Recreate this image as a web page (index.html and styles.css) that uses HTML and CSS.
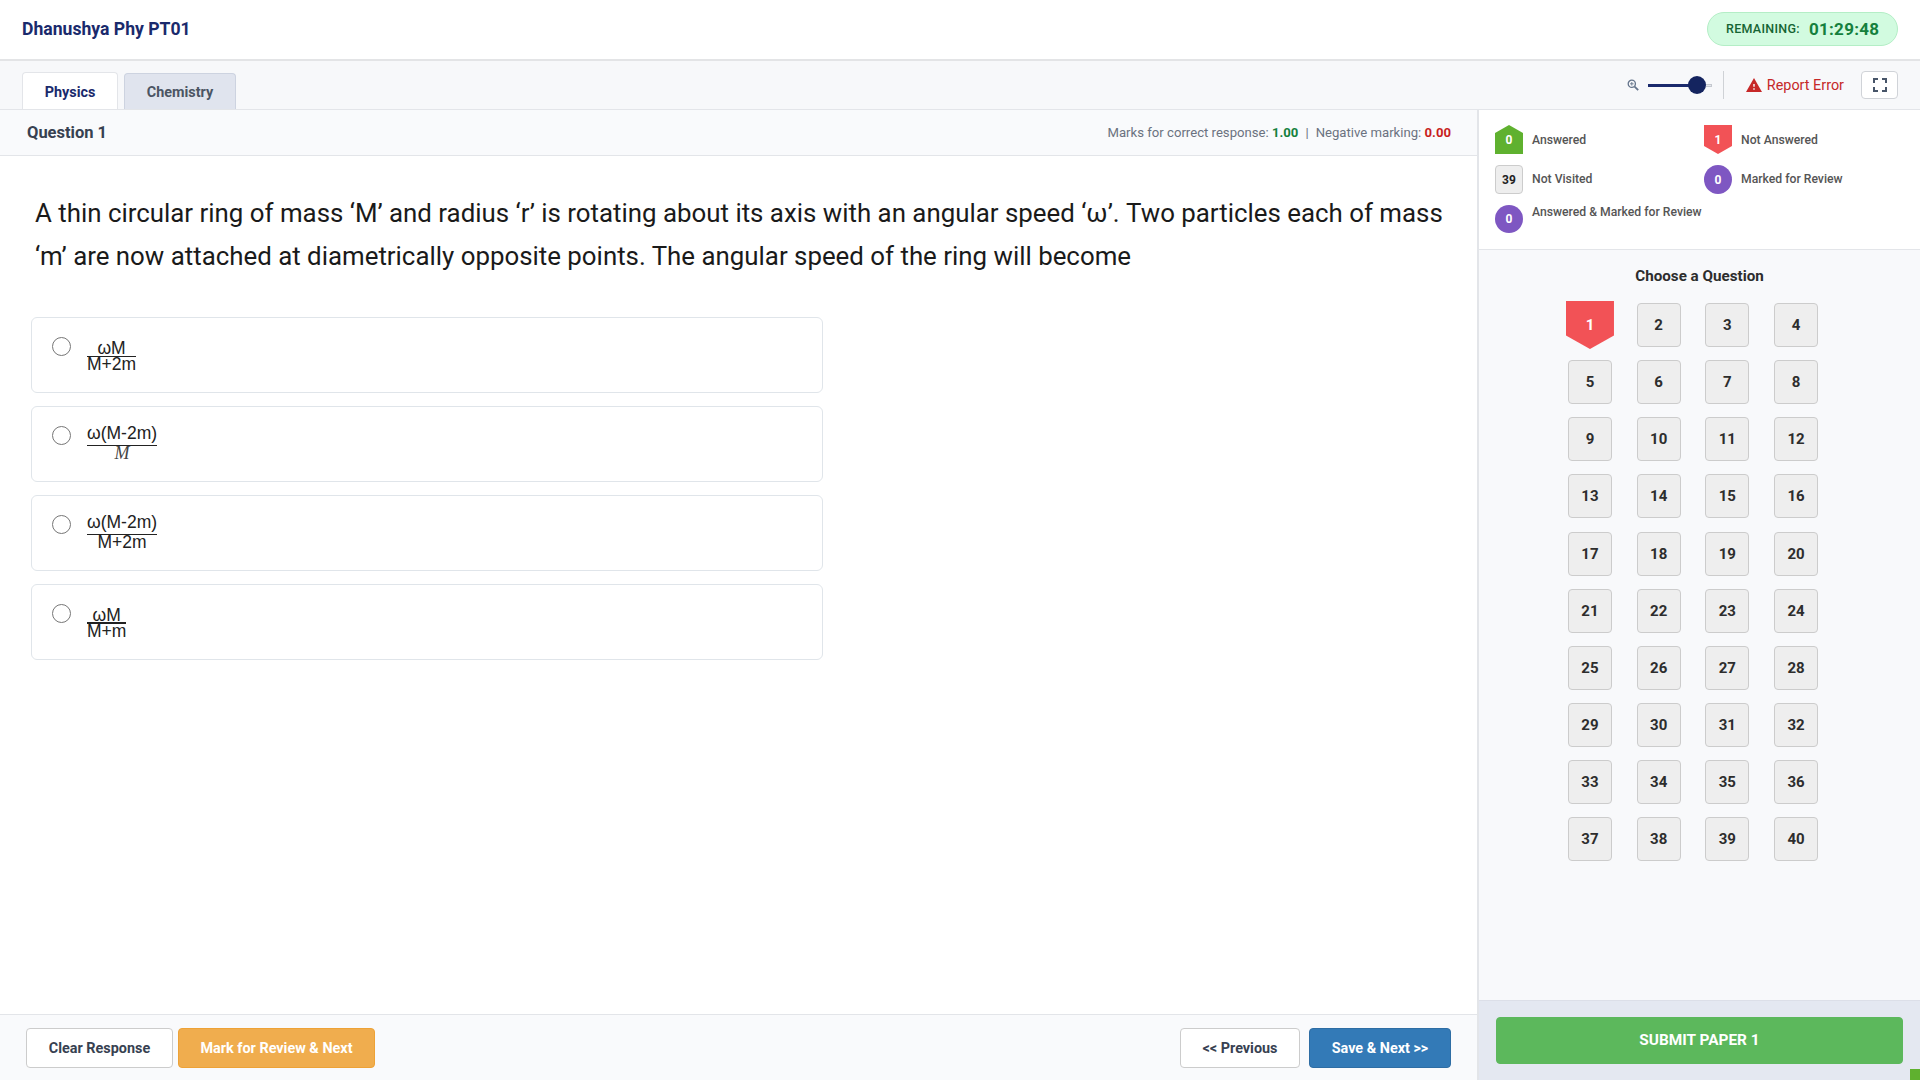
FILE: index.html
```html
<!DOCTYPE html>
<html lang="en">
<head>
<meta charset="utf-8">
<title>Dhanushya Phy PT01</title>
<link rel="stylesheet" href="styles.css">
</head>
<body>
<header class="top">
  <div class="title">Dhanushya Phy PT01</div>
  <div class="timer"><span class="timer-label">REMAINING:</span><span class="timer-value">01:29:48</span></div>
</header>
<nav class="tabbar">
  <div class="tabs">
    <div class="tab tab-active">Physics</div>
    <div class="tab tab-idle">Chemistry</div>
  </div>
  <div class="tools">
    <svg class="zoom-icon" viewBox="0 0 12 12" width="12" height="12"><circle cx="4.8" cy="4.8" r="3.6" fill="none" stroke="#64748b" stroke-width="1.3"/><path d="M7.6 7.6L11.2 11.2" stroke="#64748b" stroke-width="1.8"/><path d="M3 4.8h3.6M4.8 3v3.6" stroke="#64748b" stroke-width="0.9"/></svg>
    <div class="slider"><div class="slider-fill"></div><div class="slider-thumb"></div><div class="slider-rest"></div></div>
    <div class="sep"></div>
    <div class="report">
      <svg viewBox="1 2 22 19" width="16" height="14"><path fill="#c62828" d="M1 21h22L12 2 1 21zm12-3h-2v-2h2v2zm0-4h-2v-4h2v4z"/></svg>
      <span>Report Error</span>
    </div>
    <div class="fs-btn"><svg viewBox="0 0 24 24" width="24" height="24"><path fill="#475569" d="M7 14H5v5h5v-2H7v-3zm-2-4h2V7h3V5H5v5zm12 7h-3v2h5v-5h-2v3zM14 5v2h3v3h2V5h-5z"/></svg></div>
  </div>
</nav>
<div class="main">
  <section class="left">
    <div class="qbar">
      <div class="qname">Question 1</div>
      <div class="marks">Marks for correct response: <b class="pos">1.00</b><span class="pipe">|</span>Negative marking: <b class="neg">0.00</b></div>
    </div>
    <div class="content">
      <p class="qtext">A thin circular ring of mass ‘M’ and radius ‘r’ is rotating about its axis with an angular speed ‘ω’. Two particles each of mass ‘m’ are now attached at diametrically opposite points. The angular speed of the ring will become</p>
      <div class="options">
        <label class="option"><input type="radio" name="a" class="radio"><span class="frac"><span class="num">ωM</span><span class="den">M+2m</span></span></label>
        <label class="option"><input type="radio" name="a" class="radio"><span class="frac frac-high"><span class="num">ω(M-2m)</span><span class="den den-serif">M</span></span></label>
        <label class="option"><input type="radio" name="a" class="radio"><span class="frac frac-high"><span class="num">ω(M-2m)</span><span class="den">M+2m</span></span></label>
        <label class="option"><input type="radio" name="a" class="radio"><span class="frac frac-tight"><span class="num">ωM</span><span class="den">M+m</span></span></label>
      </div>
    </div>
    <footer class="actions">
      <div class="group">
        <button class="btn btn-plain btn-clear">Clear Response</button>
        <button class="btn btn-orange">Mark for Review &amp; Next</button>
      </div>
      <div class="group group-right">
        <button class="btn btn-plain btn-prev">&lt;&lt; Previous</button>
        <button class="btn btn-blue">Save &amp; Next &gt;&gt;</button>
      </div>
    </footer>
  </section>
  <aside class="side">
    <div class="legend">
      <div class="lg-item"><span class="lg-ic ic-green">0</span><span>Answered</span></div>
      <div class="lg-item"><span class="lg-ic ic-red">1</span><span>Not Answered</span></div>
      <div class="lg-item"><span class="lg-ic ic-grey">39</span><span class="lg-up">Not Visited</span></div>
      <div class="lg-item"><span class="lg-ic ic-purple">0</span><span class="lg-up">Marked for Review</span></div>
      <div class="lg-item lg-wide"><span class="lg-ic ic-purple ic-short">0</span><span class="lg-top">Answered &amp; Marked for Review</span></div>
    </div>
    <div class="palette">
      <div class="pal-title">Choose a Question</div>
      <div class="grid">
        <button class="q q-red">1</button><button class="q">2</button><button class="q">3</button><button class="q">4</button>
        <button class="q">5</button><button class="q">6</button><button class="q">7</button><button class="q">8</button>
        <button class="q">9</button><button class="q">10</button><button class="q">11</button><button class="q">12</button>
        <button class="q">13</button><button class="q">14</button><button class="q">15</button><button class="q">16</button>
        <button class="q">17</button><button class="q">18</button><button class="q">19</button><button class="q">20</button>
        <button class="q">21</button><button class="q">22</button><button class="q">23</button><button class="q">24</button>
        <button class="q">25</button><button class="q">26</button><button class="q">27</button><button class="q">28</button>
        <button class="q">29</button><button class="q">30</button><button class="q">31</button><button class="q">32</button>
        <button class="q">33</button><button class="q">34</button><button class="q">35</button><button class="q">36</button>
        <button class="q">37</button><button class="q">38</button><button class="q">39</button><button class="q">40</button>
      </div>
    </div>
    <div class="submit-wrap">
      <button class="submit">SUBMIT PAPER 1</button>
      <span class="corner"></span>
    </div>
  </aside>
</div>
</body>
</html>
```
FILE: styles.css
```css
* { box-sizing: border-box; }
html, body { margin: 0; height: 100%; }
body {
  width: 1920px;
  height: 1080px;
  overflow: hidden;
  display: flex;
  flex-direction: column;
  font-family: Roboto, "Liberation Sans", sans-serif;
  background: #fff;
  color: #222;
}
button { font-family: inherit; cursor: pointer; }

.top {
  height: 61px;
  flex: none;
  display: flex;
  align-items: center;
  justify-content: space-between;
  padding: 0 22px;
  border-bottom: 2px solid #e3e4e6;
  background: #fff;
}
.title { font-size: 17.6px; font-weight: 700; color: #1a2a6c; margin-top: -2px; }
.timer {
  width: 191px;
  height: 34px;
  margin-top: -2px;
  border: 1px solid #b4eec6;
  border-radius: 17px;
  background: #d2fbe0;
  display: flex;
  align-items: center;
  padding-left: 18px;
  color: #15803d;
}
.timer-label { font-size: 12.5px; font-weight: 500; letter-spacing: 0.3px; color: #166534; }
.timer-value { font-size: 17px; font-weight: 700; letter-spacing: 0.3px; margin-left: 9px; }

.tabbar {
  height: 49px;
  flex: none;
  display: flex;
  justify-content: space-between;
  background: #f7f8fa;
  border-bottom: 1px solid #e3e5e9;
  padding: 0 22px;
}
.tabs { display: flex; align-items: flex-end; gap: 6px; height: 48px; margin-bottom: -1px; }
.tab {
  font-size: 14.4px;
  font-weight: 700;
  display: flex;
  align-items: center;
  justify-content: center;
  border-radius: 4px 4px 0 0;
  border: 1px solid #e3e5e9;
  border-bottom: 0;
}
.tab-active { width: 96px; height: 37px; padding-top: 3px; background: #fff; color: #1a2a6c; }
.tab-idle { width: 112px; height: 36px; padding-top: 2px; background: #e0e4ee; border-color: #cdd3e0; color: #4b5563; }

.tools { display: flex; align-items: center; height: 48px; }
.slider { display: flex; align-items: center; margin-left: 8.5px; width: 64px; height: 18px; }
.slider-fill { width: 43px; height: 3px; background: #1a2a6c; }
.slider-thumb { width: 18px; height: 18px; border-radius: 50%; background: #14245f; margin-left: -2px; flex: none; }
.slider-rest { width: 6px; height: 3px; background: #e5e7eb; border: 1px solid #c4c8cf; border-left: 0; }
.sep { width: 1px; height: 28px; background: #cfd2d6; margin-left: 11px; }
.report { display: flex; align-items: center; gap: 5px; margin-left: 22px; font-size: 14.4px; color: #c62828; }
.fs-btn {
  width: 37px;
  height: 28px;
  margin-left: 17px;
  border: 1px solid #d0d3d8;
  border-radius: 4px;
  background: #fff;
  display: flex;
  align-items: center;
  justify-content: center;
}

.main { flex: 1; display: flex; min-height: 0; }
.left { width: 1477px; flex: none; display: flex; flex-direction: column; }
.qbar {
  height: 46px;
  flex: none;
  display: flex;
  align-items: center;
  justify-content: space-between;
  padding: 0 26px 0 27px;
  background: #f9fafc;
  border-bottom: 1px solid #e3e5e9;
}
.qname { font-size: 16.5px; font-weight: 700; color: #374151; }
.marks { font-size: 13.15px; color: #6b7280; }
.marks b { font-weight: 700; }
.pos { color: #15803d; }
.neg { color: #c81e1e; }
.pipe { margin: 0 7px; }

.content { flex: 1; padding: 36px 20px 0 31px; min-height: 0; }
.qtext { margin: 0 0 39px 4px; font-size: 25.85px; line-height: 43px; color: #1a1a1a; }
.options { display: flex; flex-direction: column; gap: 13px; width: 792px; }
.option {
  height: 76px;
  display: flex;
  align-items: flex-start;
  gap: 16px;
  padding: 18px 20px;
  background: #fff;
  border: 1px solid #e0e5ea;
  border-radius: 6px;
}
.radio { width: 19px; height: 19px; margin: 1px 0 0; flex: none; }
.frac {
  display: inline-flex;
  flex-direction: column;
  align-items: center;
  font-family: "Liberation Sans", Arial, sans-serif;
  font-size: 17.5px;
  color: #222;
}
.num { display: block; width: 100%; text-align: center; line-height: 16px; margin-top: 4px; border-bottom: 1px solid #222; }
.den { display: block; line-height: 14px; }
.den-serif { font-family: "Liberation Serif", serif; font-style: italic; font-size: 18px; color: #444; }
.frac-high .num { line-height: 20px; padding-bottom: 2px; margin-top: -2px; }
.frac-tight .num { line-height: 14px; margin-top: 5px; border-bottom-width: 2px; }

.actions {
  height: 66px;
  flex: none;
  display: flex;
  justify-content: space-between;
  align-items: flex-start;
  padding: 13px 26px 0;
  background: #f9fafc;
  border-top: 1px solid #e3e5e9;
}
.group { display: flex; gap: 5px; }
.group-right { gap: 9px; }
.btn {
  height: 40px;
  padding: 0;
  font-size: 14.4px;
  font-weight: 700;
  border-radius: 4px;
  border: 1px solid #ccc;
}
.btn-plain { background: #fff; color: #374151; }
.btn-clear { width: 147px; }
.btn-prev { width: 120px; }
.btn-orange { width: 197px; background: #f0ad4e; border-color: #eea236; color: #fff; }
.btn-blue { width: 142px; background: #337ab7; border-color: #2e6da4; color: #fff; }

.side {
  flex: 1;
  display: flex;
  flex-direction: column;
  border-left: 2px solid #e3e5e9;
  min-width: 0;
}
.legend {
  height: 140px;
  flex: none;
  display: grid;
  grid-template-columns: 209px 1fr;
  grid-auto-rows: 29px;
  row-gap: 11px;
  padding: 15px 0 0 16px;
  background: #fff;
  border-bottom: 1px solid #e3e5e9;
  font-size: 12.2px;
  font-weight: 500;
  color: #555;
}
.lg-item { display: flex; align-items: center; gap: 9px; }
.lg-wide { grid-column: 1 / 3; align-items: flex-start; white-space: nowrap; }
.lg-top { line-height: 14px; }
.lg-up { margin-bottom: 2px; }
.lg-ic {
  width: 28px;
  height: 29px;
  flex: none;
  display: flex;
  align-items: center;
  justify-content: center;
  font-size: 12px;
  font-weight: 700;
  color: #fff;
}
.ic-green { background: #5fb12f; clip-path: polygon(50% 0, 100% 28%, 100% 100%, 0 100%, 0 28%); }
.ic-red { background: #f25256; clip-path: polygon(0 0, 100% 0, 100% 72%, 50% 100%, 0 72%); }
.ic-grey { background: #eee; border: 1px solid #ccc; border-radius: 4px; color: #222; }
.ic-purple { background: #7e57c2; border-radius: 50%; }
.ic-short { height: 28px; }

.palette { flex: 1; background: #f8f9fb; padding-top: 17px; min-height: 0; }
.pal-title { text-align: center; font-size: 15.2px; font-weight: 700; line-height: 18px; color: #2d2d2d; }
.grid {
  margin-top: 18px;
  padding-right: 13px;
  display: grid;
  grid-template-columns: repeat(4, 44px);
  grid-auto-rows: 44px;
  column-gap: 24.7px;
  row-gap: 13.13px;
  justify-content: center;
}
.q {
  padding: 0;
  width: 44px;
  height: 44px;
  font-size: 15px;
  font-weight: 700;
  color: #2d2d2d;
  background: #eee;
  border: 1px solid #ccc;
  border-radius: 4px;
}
.q-red {
  width: 48px;
  height: 48px;
  margin: -2px;
  background: #f25256;
  border: 0;
  border-radius: 0;
  color: #fff;
  clip-path: polygon(0 0, 100% 0, 100% 72%, 50% 100%, 0 72%);
}

.submit-wrap {
  position: relative;
  height: 80px;
  flex: none;
  background: #e4e8f1;
  border-top: 1px solid #dcdfe8;
  padding: 16px 17px 0 17px;
}
.submit {
  width: 100%;
  height: 47px;
  padding: 0 0 2px;
  border: 1px solid #5cb85c;
  border-radius: 4px;
  background: #5cb85c;
  color: #fff;
  font-size: 15.4px;
  font-weight: 700;
}
.corner {
  position: absolute;
  right: 0;
  bottom: 0;
  width: 10px;
  height: 11px;
  background: #5fb12f;
}
```
